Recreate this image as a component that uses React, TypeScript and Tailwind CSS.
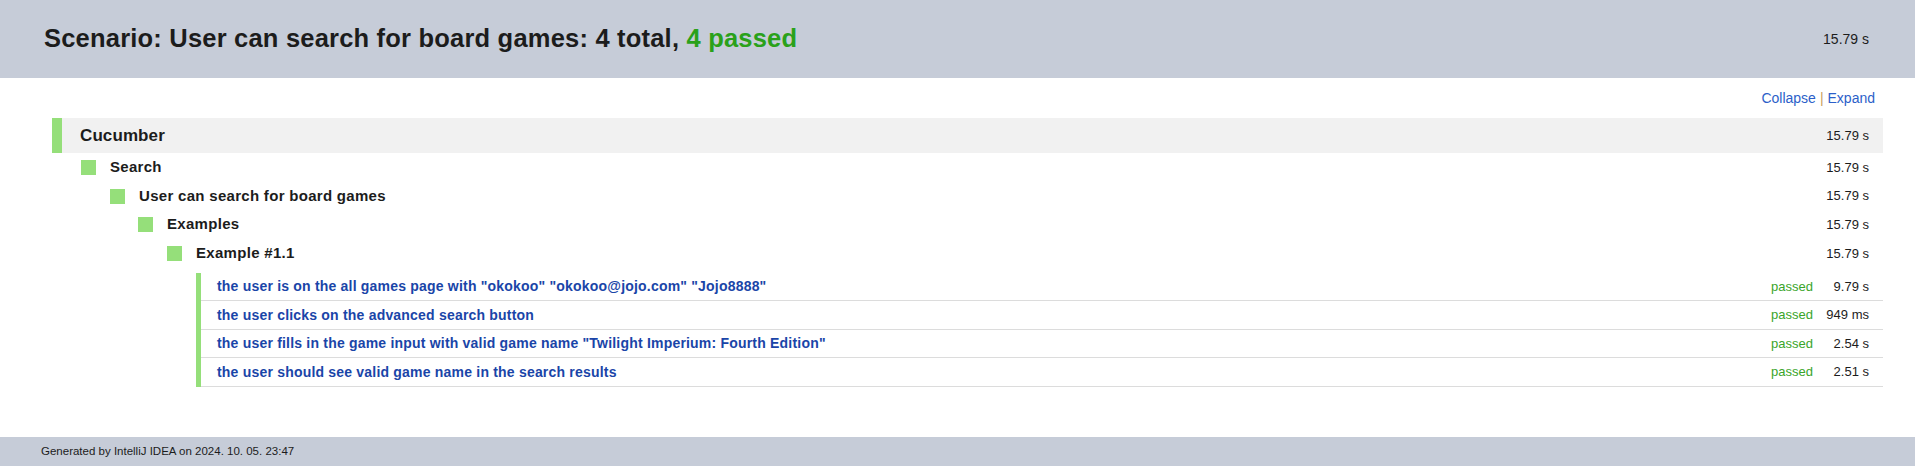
import React from "react";

const tree = [
  { label: "Search", indent: 0 },
  { label: "User can search for board games", indent: 1 },
  { label: "Examples", indent: 2 },
  { label: "Example #1.1", indent: 3 },
];

const indentClass = ["pl-[29px]", "pl-[58px]", "pl-[86px]", "pl-[115px]"];

const steps = [
  { text: 'the user is on the all games page with "okokoo" "okokoo@jojo.com" "Jojo8888"', time: "9.79 s" },
  { text: "the user clicks on the advanced search button", time: "949 ms" },
  { text: 'the user fills in the game input with valid game name "Twilight Imperium: Fourth Edition"', time: "2.54 s" },
  { text: "the user should see valid game name in the search results", time: "2.51 s" },
];

export default function App() {
  return (
    <div className="w-[1915px] h-[471px] bg-white text-[#1c1c1c] font-['Liberation_Sans',Arial,sans-serif] flex flex-col">
      <div className="h-[78px] bg-[#c6ccd8] flex items-center justify-between pl-[44px] pr-[46px]">
        <h1 className="text-[25.5px] font-bold leading-none tracking-[0.2px]">
          Scenario: User can search for board games: 4 total,{" "}
          <span className="text-[#2aa11a]">4 passed</span>
        </h1>
        <span className="text-[14px]">15.79 s</span>
      </div>

      <div className="flex-1 pl-[52px] pr-[32px]">
        <div className="flex justify-end h-[40px] items-center pr-[8px] text-[14px]">
          <span className="text-[#2c5fc9]">Collapse</span>
          <span className="text-[#c9a060] mx-[4px]">|</span>
          <span className="text-[#2c5fc9]">Expand</span>
        </div>

        <div className="h-[35px] bg-[#f1f1f1] flex items-center">
          <div className="w-[10px] h-full bg-[#95df7a]" />
          <span className="ml-[18px] text-[17px] font-bold flex-1 tracking-[0.1px]">Cucumber</span>
          <span className="text-[13px] pr-[14px]">15.79 s</span>
        </div>

        {tree.map((t) => (
          <div key={t.label} className={`h-[28.7px] flex items-center ${indentClass[t.indent]}`}>
            <div className="w-[15px] h-[15px] bg-[#95df7a]" />
            <span className="ml-[14px] text-[15px] font-bold flex-1 tracking-[0.3px]">{t.label}</span>
            <span className="text-[13px] pr-[14px]">15.79 s</span>
          </div>
        ))}

        <div className="ml-[144px] mt-[5px]">
          {steps.map((s) => (
            <div key={s.text} className="h-[28.5px] flex items-stretch">
              <div className="w-[5px] bg-[#95df7a]" />
              <div className="flex-1 flex items-center border-b border-[#dcdcdc]">
                <span className="ml-[16px] text-[14px] font-bold text-[#1a45a8] flex-1 tracking-[0.2px]">{s.text}</span>
                <span className="text-[13px] text-[#3aa52a] w-[42px]">passed</span>
                <span className="text-[13px] w-[70px] text-right pr-[14px]">{s.time}</span>
              </div>
            </div>
          ))}
        </div>
      </div>

      <div className="h-[29px] bg-[#c6ccd8] flex items-center pl-[41px] text-[11.5px] mb-[5px]">
        Generated by IntelliJ IDEA on 2024. 10. 05. 23:47
      </div>
    </div>
  );
}
